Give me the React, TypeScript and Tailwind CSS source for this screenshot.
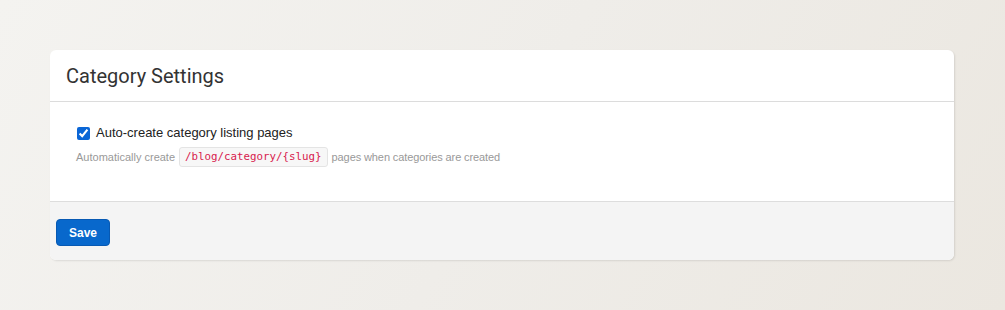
import React from "react";

export default function App() {
  return (
    <div
      className="w-[1005px] h-[310px] pt-[50px] pl-[50px] pr-[51px] bg-[linear-gradient(120deg,#f4f3f0_0%,#efede9_50%,#ebe7e0_100%)]"
      style={{ fontFamily: '"Liberation Sans", Arial, sans-serif' }}
    >
      <div className="w-[904px] h-[210px] bg-white rounded-[6px] overflow-hidden flex flex-col shadow-[1px_1px_2px_rgba(0,0,0,0.1)]">
        <div className="h-[52px] flex items-center px-4 border-b border-[#dcdcdc]">
          <h2
            className="text-[20px] text-[#333] leading-none pt-[1px]"
            style={{ fontFamily: 'Roboto, "Liberation Sans", sans-serif' }}
          >
            Category Settings
          </h2>
        </div>
        <div className="flex-1 pl-[26px] pt-[21px]">
          <label className="flex items-center gap-[6px] h-[20px]">
            <input
              type="checkbox"
              defaultChecked
              className="w-[13px] h-[13px] m-0 ml-[1px] accent-[#0a66d6]"
            />
            <span className="text-[13px] text-[#222]">Auto-create category listing pages</span>
          </label>
          <div className="mt-[4px] flex items-center text-[11px] text-[#999] h-[20px]">
            <span>Automatically create</span>
            <code
              className="mx-[4px] h-[20px] px-[5px] flex items-center rounded-[3px] border border-[#e4e4e4] bg-[#f7f7f7] text-[#d81b4e] text-[10.8px]"
              style={{ fontFamily: '"DejaVu Sans Mono", "Liberation Mono", monospace' }}
            >
              /blog/category/{"{slug}"}
            </code>
            <span className="tracking-[-0.1px]">pages when categories are created</span>
          </div>
        </div>
        <div className="h-[59px] bg-[#f4f4f4] border-t border-[#dddddd] pl-[6px] pt-[17px]">
          <button className="w-[54px] h-[27px] rounded-[4px] bg-[#0868cc] border border-[#0759b3] text-white text-[12px] font-bold">
            Save
          </button>
        </div>
      </div>
    </div>
  );
}
